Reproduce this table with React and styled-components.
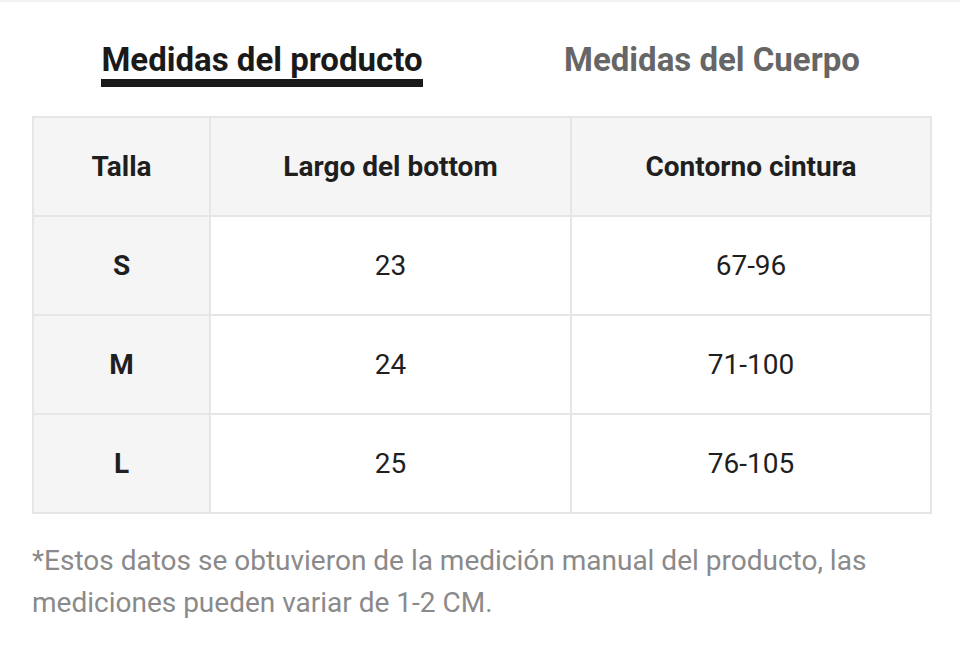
import React, { useState } from "react";
import styled, { createGlobalStyle } from "styled-components";

const Global = createGlobalStyle`
  html, body {
    margin: 0;
    padding: 0;
    background: #fff;
    font-family: Roboto, "Liberation Sans", Arial, sans-serif;
  }
`;

const Page = styled.div`
  width: 960px;
  height: 659px;
  box-sizing: border-box;
  border-top: 2px solid #f2f2f2;
  padding: 39px 30px 0 32px;
  overflow: hidden;
`;

const Tabs = styled.div`
  display: grid;
  grid-template-columns: 450px 450px;
  margin: 0 -7px 29px 5px;
`;

const TabSlot = styled.div`
  display: flex;
  justify-content: center;
`;

const Tab = styled.button`
  background: none;
  border: none;
  padding: 0;
  font-family: inherit;
  font-size: 33px;
  font-weight: 700;
  line-height: 38px;
  cursor: pointer;
  color: ${(p) => (p.$active ? "#1a1a1a" : "#666")};
  border-bottom: 8px solid ${(p) => (p.$active ? "#1a1a1a" : "transparent")};
`;

const Table = styled.table`
  width: 898px;
  border-collapse: collapse;
  table-layout: fixed;
  border: 2px solid #e6e6e6;
`;

const Cell = styled.td`
  height: 97px;
  padding: 0;
  text-align: center;
  vertical-align: middle;
  border: 2px solid #e6e6e6;
  font-size: 28px;
  color: #1f1f1f;
  font-weight: ${(p) => (p.$head ? 700 : 400)};
  background: ${(p) => (p.$head ? "#f5f5f5" : "#fff")};
`;

const Note = styled.p`
  margin: 26px 0 0;
  font-size: 28px;
  line-height: 42px;
  color: #8a8a8a;
`;

const rows = [
  ["S", "23", "67-96"],
  ["M", "24", "71-100"],
  ["L", "25", "76-105"],
];

export default function App() {
  const [tab, setTab] = useState(0);
  return (
    <Page>
      <Global />
      <Tabs>
        <TabSlot>
          <Tab $active={tab === 0} onClick={() => setTab(0)}>
            Medidas del producto
          </Tab>
        </TabSlot>
        <TabSlot>
          <Tab $active={tab === 1} onClick={() => setTab(1)}>
            Medidas del Cuerpo
          </Tab>
        </TabSlot>
      </Tabs>
      <Table>
        <colgroup>
          <col style={{ width: 177 }} />
          <col style={{ width: 361 }} />
          <col style={{ width: 360 }} />
        </colgroup>
        <thead>
          <tr>
            <Cell as="th" $head>Talla</Cell>
            <Cell as="th" $head>Largo del bottom</Cell>
            <Cell as="th" $head>Contorno cintura</Cell>
          </tr>
        </thead>
        <tbody>
          {rows.map((r) => (
            <tr key={r[0]}>
              <Cell $head>{r[0]}</Cell>
              <Cell>{r[1]}</Cell>
              <Cell>{r[2]}</Cell>
            </tr>
          ))}
        </tbody>
      </Table>
      <Note>
        *Estos datos se obtuvieron de la medición manual del producto, las
        mediciones pueden variar de 1-2 CM.
      </Note>
    </Page>
  );
}
